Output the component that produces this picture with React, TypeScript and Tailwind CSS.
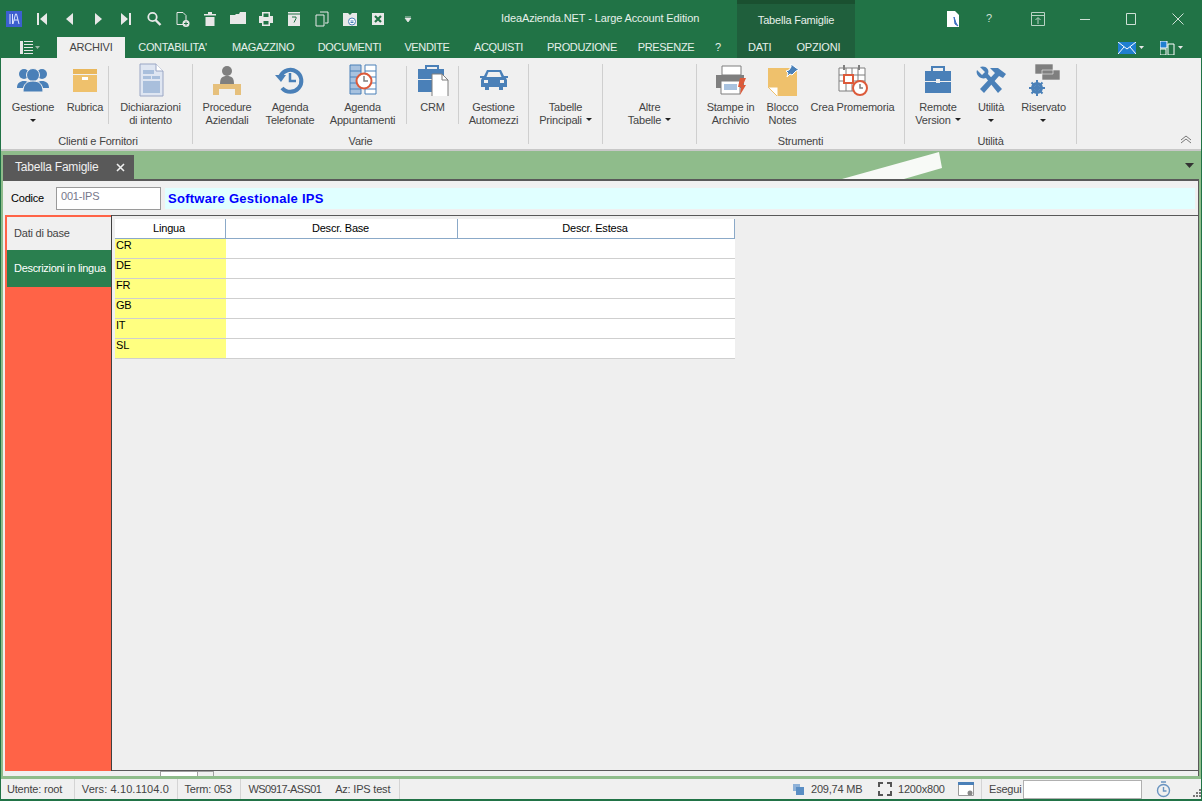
import type { ReactNode } from "react";

const blue = "#4a80b8";
const tan = "#efc16c";
const grey = "#7f7f7f";
const red = "#dc5a3a";

// white glyphs of the quick access toolbar, 16x16 box
const quickIcons: ReactNode[] = [
  <path d="M3 2h2v12H3zM13 2v12L6 8z" fill="#e8e8e8" />,
  <path d="M11 2v12L4 8z" fill="#e8e8e8" />,
  <path d="M5 2v12l7-6z" fill="#e8e8e8" />,
  <path d="M3 2v12l7-6zM11 2h2v12h-2z" fill="#e8e8e8" />,
  <g fill="none" stroke="#e8e8e8"><circle cx="6.5" cy="6" r="4.2" strokeWidth="1.8" /><path d="M9.5 9l5 5" strokeWidth="2.4" /></g>,
  <g><path d="M3 1.5h6l3 3v9H3z" fill="none" stroke="#e8e8e8" /><circle cx="12" cy="12.5" r="3.5" fill="#e8e8e8" /><path d="M10 12.5h4M12 10.5v4" stroke="#217346" /></g>,
  <path d="M6 1h4v2h4v1.5H2V3h4zM3.500 6h9v9h-9z" fill="#e8e8e8" />,
  <path d="M0 4h5l1-1h3l1-2h6v12H0z" fill="#e8e8e8" />,
  <path d="M4 1h8v4h3v7h-3v3H4v-3H1V5h3zM5.500 2.500V6h5V2.500zM5.500 10v3.500h5V10z" fill="#e8e8e8" fillRule="evenodd" />,
  <g><path d="M2 1h12v14H2z" fill="#e8e8e8" /><path d="M2 3h12" stroke="#217346" /><path d="M6 6h4v1.500l-2 4" stroke="#217346" fill="none" /></g>,
  <path d="M6 1h8v11h-3M2 4h8v11H2z" fill="none" stroke="#e8e8e8" />,
  <g><path d="M1 2h5l2 2 2-2h5v13H1z" fill="#e8e8e8" /><circle cx="10" cy="10.500" r="3.500" fill="#fff" stroke="#4a80b8" /><path d="M8.500 10h3M8.500 11.500h3" stroke="#4a80b8" /></g>,
  <g><path d="M2 2h12v12H2z" fill="#e8e8e8" /><path d="M5 5l6 6M11 5l-6 6" stroke="#217346" strokeWidth="2.200" /></g>,
];

const Caret = () => (
  <svg width="6" height="3" viewBox="0 0 6 3" className="inline-block">
    <path d="M0 0h6L3 3z" fill="#222" />
  </svg>
);

type ItemProps = { w: string; icon?: ReactNode; lines: string[]; caret?: "inline" | "below" };

function RibbonItem({ w, icon, lines, caret }: ItemProps) {
  return (
    <div className={`${w} flex flex-col items-center shrink-0`}>
      <div className="h-[34px] flex items-center justify-center shrink-0">{icon}</div>
      <div className="mt-[4px] text-center leading-[13px] text-[#444] whitespace-nowrap">
        {lines.map((l, i) => (
          <div key={l}>
            {l}
            {caret === "inline" && i === lines.length - 1 && <span className="ml-[4px] relative -top-[2px]"><Caret /></span>}
          </div>
        ))}
        {caret === "below" && <div className="h-[13px] flex items-center justify-center"><Caret /></div>}
      </div>
    </div>
  );
}

const ShortSep = () => <div className="w-px h-[58px] mt-[3px] bg-[#cfcfcf] shrink-0" />;

function RibbonGroup({ w, label, children }: { w: string; label: string; children?: ReactNode }) {
  return (
    <div className={`${w} shrink-0 flex flex-col border-r border-[#cfcfcf] h-[80px] mt-[6px]`}>
      <div className="flex h-[72px] -mt-[1px] shrink-0">{children}</div>
      <div className="text-center text-[#444] leading-[13px] shrink-0">{label}</div>
    </div>
  );
}

const iconProps = { viewBox: "0 0 32 32", width: 32, height: 32 };

const PeopleIcon = () => (
  <svg {...iconProps}>
    <g fill={blue}>
      <circle cx="7" cy="10" r="5" /><circle cx="25" cy="10" r="5" />
      <path d="M0 24c0-5 3-7 7-7s7 2 7 7zM18 24c0-5 3-7 7-7s7 2 7 7z" />
    </g>
    <circle cx="16" cy="11" r="6.500" fill={blue} stroke="#f0f0f0" />
    <path d="M6 28c0-8 4-11 10-11s10 3 10 11z" fill={blue} stroke="#f0f0f0" />
  </svg>
);

const BoxIcon = () => (
  <svg {...iconProps}>
    <path d="M4 5h24v5H4z" fill="#e9b75c" /><path d="M4 11h24v17H4z" fill={tan} />
    <path d="M13 13h6v3h-6z" fill="#fff" />
  </svg>
);

const DocIcon = () => (
  <svg width="28" height="34" viewBox="0 0 28 34">
    <path d="M3 1h16l7 7v25H3z" fill="#dfe6f2" stroke="#9aa6c4" />
    <path d="M19 1v7h7" fill="#fff" stroke="#9aa6c4" />
    <path d="M6 7h11v4H6zM6 13h8v3H6zM15 13h8v3h-8zM6 18h17v12H6z" fill="#a9bfdc" />
  </svg>
);

const DeskIcon = () => (
  <svg {...iconProps}>
    <circle cx="16" cy="7" r="5" fill={grey} /><path d="M9 20c0-6 2-8 7-8s7 2 7 8z" fill={grey} />
    <path d="M2 20h28v11h-6v-6H8v6H2z" fill="#e6c07c" />
  </svg>
);

const HistoryIcon = () => (
  <svg {...iconProps}>
    <path d="M6.500 12A11 11 0 1 1 8 24" fill="none" stroke={blue} strokeWidth="4" />
    <path d="M1 11h11l-5 7z" fill={blue} />
    <path d="M16 9v8h6" fill="none" stroke={blue} strokeWidth="2.500" />
  </svg>
);

const PlannerIcon = () => (
  <svg {...iconProps}>
    <path d="M3 1h11v29H3z" fill="#a8c2df" stroke={blue} /><path d="M18 1h11v29H18z" fill="#fff" stroke={blue} />
    <path d="M3 7h11M3 13h11M3 19h11M3 25h11M18 7h11M18 13h11M18 19h11M18 25h11" stroke={blue} />
    <circle cx="17" cy="17" r="7.500" fill="#fff" stroke={red} strokeWidth="2" /><path d="M17 12v5h4" fill="none" stroke={grey} strokeWidth="1.500" />
  </svg>
);

const CrmIcon = () => (
  <svg {...iconProps}>
    <path d="M9 5V2h12v3" fill="none" stroke={blue} strokeWidth="2" />
    <path d="M1 5h26v10H1zM1 16h26v12H1z" fill={blue} />
    <path d="M15 10h10l6 6v17H15z" fill="#fff" stroke={grey} /><path d="M25 10v6h6" fill="none" stroke={grey} />
  </svg>
);

const CarIcon = () => (
  <svg width="28" height="20" viewBox="0 0 28 20">
    <path d="M7 0h14l3 6h4v2h-2l1 2v7h-4v3h-4v-3H9v3H5v-3H1v-7l1-2H0V6h4z" fill={blue} />
    <path d="M8.500 2h11l2 5h-15z" fill="#f0f0f0" />
    <path d="M4 10h4v3H4zM20 10h4v3h-4z" fill="#f0f0f0" />
  </svg>
);

const PrintIcon = () => (
  <svg {...iconProps}>
    <path d="M7 2h19v9H7z" fill="#fff" stroke={grey} /><path d="M1 11h28v13H1z" fill={grey} />
    <path d="M6 17h19v13H6z" fill="#fff" stroke={grey} /><path d="M9 20h13v6H9z" fill="#a8c2df" />
    <path d="M25 14h6l-3 7h3l-6 10 1-8h-3z" fill={red} />
  </svg>
);

const NoteIcon = () => (
  <svg {...iconProps}>
    <path d="M1 4h29v29H11L1 23z" fill={tan} /><path d="M1 23h10v10z" fill="#fff" stroke={tan} />
    <path d="M24 0l8 6-3 1-4 4-2-1-3 3 1-4-2-2 3-1 2-3z" fill={blue} stroke="#fff" />
  </svg>
);

const CalendarIcon = () => (
  <svg {...iconProps}>
    <path d="M2 4h26v23H2z" fill="#fff" stroke={grey} />
    <path d="M2 11h26M2 17h26M9 4v23M15 4v23M21 4v23" stroke={grey} />
    <path d="M7 1v5M22 1v5" stroke={grey} strokeWidth="2" />
    <path d="M7 11h9v8H7z" fill="#fff" stroke={red} strokeWidth="2" />
    <circle cx="23" cy="24" r="7" fill="#fff" stroke={red} strokeWidth="2" /><path d="M23 20v4h3" fill="none" stroke={grey} strokeWidth="1.500" />
  </svg>
);

const CaseIcon = () => (
  <svg {...iconProps}>
    <path d="M10 7V3h12v4" fill="none" stroke={blue} strokeWidth="2" />
    <path d="M3 7h26v10H3zM3 18h26v11H3z" fill={blue} /><path d="M14 15h4v4h-4z" fill="#f0f0f0" />
  </svg>
);

const ToolsIcon = () => (
  <svg {...iconProps}>
    <path d="M2 6l5 5 3-3-5-5c5-2 10 2 8 7l14 15-4 4L11 14C6 16 0 11 2 6z" fill={blue} />
    <path d="M15 4h8l8 6-3 4-4-2L9 29l-4-4L20 9z" fill={blue} />
  </svg>
);

const ReservedIcon = () => (
  <svg {...iconProps}>
    <path d="M7 0h18v10H7zM14 6h18v10H14z" fill={grey} stroke="#f0f0f0" strokeWidth="0.600" />
    <circle cx="9" cy="24" r="4.500" fill="none" stroke={blue} strokeWidth="3" />
    <path d="M9 16v16M1 24h16M3.500 18.500l11 11M14.500 18.500l-11 11" stroke={blue} strokeWidth="2" />
  </svg>
);

type Col = { text: string; w: string };
const columns: Col[] = [
  { text: "Lingua", w: "w-[111px]" },
  { text: "Descr. Base", w: "w-[232px]" },
  { text: "Descr. Estesa", w: "w-[277px]" },
];
const languages = ["CR", "DE", "FR", "GB", "IT", "SL"];
const tabs = [
  { text: "CONTABILITA'", w: "w-[95px]" },
  { text: "MAGAZZINO", w: "w-[86px]" },
  { text: "DOCUMENTI", w: "w-[87px]" },
  { text: "VENDITE", w: "w-[68px]" },
  { text: "ACQUISTI", w: "w-[75px]" },
  { text: "PRODUZIONE", w: "w-[92px]" },
  { text: "PRESENZE", w: "w-[76px]" },
  { text: "?", w: "w-[28px]" },
];
const statusLeft = [
  { text: "Utente: root", box: "w-[69px] pl-px border-r border-[#d4d4d4]" },
  { text: "Vers: 4.10.1104.0", box: "w-[103px] pl-[7px] border-r border-[#d4d4d4] tracking-[0.1px]" },
  { text: "Term: 053", box: "w-[64px] pl-[7px] border-r border-[#d4d4d4]" },
  { text: "WS0917-ASS01", box: "w-[88px] pl-[7px] tracking-[-0.6px]" },
  { text: "Az: IPS test", box: "w-[71px] pl-[6px] border-r border-[#d4d4d4]" },
];

export default function App() {
  return (
    <div className="w-[1202px] h-[801px] overflow-hidden bg-[#217346] flex flex-col text-[11px] tracking-[-0.2px] font-['Liberation_Sans',sans-serif]">
      {/* title bar */}
      <div className="h-[37px] flex items-stretch text-white shrink-0">
        <div className="w-[422px] flex items-center pl-[6px] shrink-0">
          <svg width="16" height="16" viewBox="0 0 16 16">
            <path d="M0 0h16v16H0z" fill="#3c5fd0" />
            <path d="M4 3v10M6.500 3v10M7 13l2.500-10h1l2.500 10M8 9h4" stroke="#dfe6ff" fill="none" />
          </svg>
          <div className="flex ml-[6px]">
            {quickIcons.map((g, i) => (
              <div key={i} className="w-[28px] flex justify-center">
                <svg width="16" height="16" viewBox="0 0 16 16">{g}</svg>
              </div>
            ))}
          </div>
          <svg width="8" height="6" viewBox="0 0 8 6" className="ml-[12px]"><path d="M1 0h6M1 2h6l-3 4z" stroke="#e8e8e8" fill="#e8e8e8" strokeWidth="0.800" /></svg>
        </div>
        <div className="w-[315px] pl-[79px] flex items-center text-[#e6f0ea] whitespace-nowrap shrink-0 tracking-[-0.12px]">IdeaAzienda.NET - Large Account Edition</div>
        <div className="w-[118px] bg-[#1f5f3c] border-t-[4px] border-[#1a5030] flex items-center justify-center text-[#e6f0ea] shrink-0">Tabella Famiglie</div>
        <div className="flex-1 flex items-center pl-[91px] text-[#cfe0d6]">
          <svg width="14" height="18" viewBox="0 0 14 18"><path d="M1 1h8l4 4v12H1z" fill="#fff" /><path d="M8 7l1 7 3 2-2-3z" fill="#3c6fc0" stroke="#3c6fc0" /></svg>
          <span className="ml-[26px] w-[7px]">?</span>
          <svg width="14" height="14" viewBox="0 0 14 14" className="ml-[38px]" fill="none" stroke="#b9d2c4"><path d="M.5.500h13v13H.5zM.5 3.500h13M7 12V6M4.500 8L7 5.500 9.500 8" /></svg>
          <svg width="12" height="12" viewBox="0 0 12 12" className="ml-[34px]" stroke="#cfe0d6"><path d="M1 6.500h10" /></svg>
          <svg width="10" height="12" viewBox="0 0 10 12" className="ml-[35px]" fill="none" stroke="#cfe0d6"><path d="M.5.500h9v11h-9z" /></svg>
          <svg width="12" height="12" viewBox="0 0 12 12" className="ml-[36px]" stroke="#cfe0d6"><path d="M.5.500l11 11M11.500.500l-11 11" /></svg>
        </div>
      </div>

      {/* ribbon tabs */}
      <div className="h-[21px] flex items-stretch text-[#e6f0ea] shrink-0">
        <div className="w-[57px] pl-[20px] flex items-center gap-[2px] shrink-0">
          <svg width="13" height="13" viewBox="0 0 13 13"><path d="M0 0h3v13H0z" fill="#e8e8e8" /><path d="M4 .500h9M4 3.500h9M4 6.500h9M4 9.500h9M4 12.500h9" stroke="#e8e8e8" /></svg>
          <svg width="5" height="3" viewBox="0 0 5 3"><path d="M0 0h5L2.500 3z" fill="#9db8a8" /></svg>
        </div>
        <div className="w-[68px] bg-[#f0f0f0] text-[#444] flex items-center justify-center shrink-0">ARCHIVI</div>
        <div className="flex items-center shrink-0 w-[612px] tracking-[-0.35px]">
          {tabs.map((t) => (
            <span key={t.text} className={`${t.w} text-center whitespace-nowrap`}>{t.text}</span>
          ))}
        </div>
        <div className="w-[118px] bg-[#1f5f3c] flex items-center pl-[11px] gap-[25px] shrink-0">
          <span>DATI</span><span>OPZIONI</span>
        </div>
        <div className="flex-1 flex items-center pl-[263px] gap-[3px]">
          <svg width="18" height="12" viewBox="0 0 18 12"><path d="M0 0h18v12H0z" fill="#1f7fd0" /><path d="M0 0l9 7 9-7M0 12l6-7M18 12l-6-7" stroke="#fff" fill="none" /></svg>
          <svg width="5" height="3" viewBox="0 0 5 3"><path d="M0 0h5L2.500 3z" fill="#e8e8e8" /></svg>
          <svg width="15" height="14" viewBox="0 0 15 14" className="ml-[13px]"><path d="M0 0h7v7H0z" fill="#1f7fd0" stroke="#fff" /><path d="M0 8h6v6H0zM8 3h6v11H8z" fill="none" stroke="#fff" /></svg>
          <svg width="5" height="3" viewBox="0 0 5 3"><path d="M0 0h5L2.500 3z" fill="#e8e8e8" /></svg>
        </div>
      </div>

      <div className="flex-1 mx-px min-h-0 flex flex-col">
        {/* ribbon body */}
        <div className="h-[93px] bg-[#f0f0f0] border-b-2 border-[#c8c8c8] flex shrink-0 pl-[3px]">
          <RibbonGroup w="w-[189px]" label="Clienti e Fornitori">
            <RibbonItem w="w-[58px]" icon={<PeopleIcon />} lines={["Gestione"]} caret="below" />
            <RibbonItem w="w-[46px]" icon={<BoxIcon />} lines={["Rubrica"]} />
            <ShortSep />
            <RibbonItem w="w-[83px]" icon={<DocIcon />} lines={["Dichiarazioni", "di intento"]} />
          </RibbonGroup>
          <RibbonGroup w="w-[336px]" label="Varie">
            <RibbonItem w="w-[68px]" icon={<DeskIcon />} lines={["Procedure", "Aziendali"]} />
            <RibbonItem w="w-[58px]" icon={<HistoryIcon />} lines={["Agenda", "Telefonate"]} />
            <RibbonItem w="w-[87px]" icon={<PlannerIcon />} lines={["Agenda", "Appuntamenti"]} />
            <ShortSep />
            <RibbonItem w="w-[51px]" icon={<CrmIcon />} lines={["CRM"]} />
            <ShortSep />
            <RibbonItem w="w-[69px]" icon={<CarIcon />} lines={["Gestione", "Automezzi"]} />
          </RibbonGroup>
          <RibbonGroup w="w-[74px]" label="">
            <RibbonItem w="w-[73px]" lines={["Tabelle", "Principali"]} caret="inline" />
          </RibbonGroup>
          <RibbonGroup w="w-[94px]" label="">
            <RibbonItem w="w-[93px]" lines={["Altre", "Tabelle"]} caret="inline" />
          </RibbonGroup>
          <RibbonGroup w="w-[208px]" label="Strumenti">
            <RibbonItem w="w-[67px]" icon={<PrintIcon />} lines={["Stampe in", "Archivio"]} />
            <RibbonItem w="w-[37px]" icon={<NoteIcon />} lines={["Blocco", "Notes"]} />
            <RibbonItem w="w-[103px]" icon={<CalendarIcon />} lines={["Crea Promemoria"]} />
          </RibbonGroup>
          <RibbonGroup w="w-[172px]" label="Utilità">
            <RibbonItem w="w-[66px]" icon={<CaseIcon />} lines={["Remote", "Version"]} caret="inline" />
            <RibbonItem w="w-[40px]" icon={<ToolsIcon />} lines={["Utilità"]} caret="below" />
            <RibbonItem w="w-[65px]" icon={<ReservedIcon />} lines={["Riservato"]} caret="below" />
          </RibbonGroup>
          <div className="flex-1 flex items-end justify-end pr-[9px] pb-[5px]">
            <svg width="12" height="9" viewBox="0 0 12 9" fill="none" stroke="#777"><path d="M1 5l5-4 5 4M1 8l5-4 5 4" /></svg>
          </div>
        </div>

        {/* document tab strip */}
        <div className="relative h-[28px] bg-[#8fbc8b] shrink-0 flex items-end pl-[2px]">
          <div className="w-[131px] h-[24px] bg-[#595959] text-[#f0f0f0] text-[12px] flex items-center pl-[12px] justify-between pr-[9px]">
            <span>Tabella Famiglie</span>
            <svg width="9" height="9" viewBox="0 0 9 9" stroke="#f0f0f0" strokeWidth="1.600"><path d="M1 1l7 7M8 1L1 8" /></svg>
          </div>
          <svg width="100" height="28" viewBox="0 0 100 28" className="absolute left-[841px] top-0"><path d="M0 28L97 1l3 16-38 11z" fill="#f8faf7" /></svg>
          <svg width="9" height="5" viewBox="0 0 9 5" className="absolute right-[7px] top-[12px]"><path d="M0 0h9L4.500 5z" fill="#333" /></svg>
        </div>

        {/* document */}
        <div className="flex-1 min-h-0 bg-[#8fbc8b] px-[2px] flex flex-col">
          <div className="h-[2px] bg-[#595959] shrink-0" />
          <div className="flex-1 min-h-0 bg-[#f0f0f0] flex flex-col border-r border-[#595959]">
            <div className="h-[34px] flex items-center shrink-0 pl-[8px] pr-[3px]">
              <span className="w-[45px] text-black">Codice</span>
              <div className="w-[105px] h-[23px] bg-white border border-[#9a9a9a] pl-[4px] text-[#77778a] leading-[17px]">001-IPS</div>
              <div className="flex-1 h-[21px] ml-[4px] bg-[#e0ffff] pl-[3px] text-[#0000ff] font-bold text-[13px] leading-[22px] tracking-[0.27px]">Software Gestionale IPS</div>
            </div>
            <div className="flex-1 min-h-0 flex ml-[2px]">
              <div className="w-[107px] bg-[#ff6347] border-r border-[#404040] shrink-0 pl-[2px] pt-[2px]">
                <div className="h-[33px] bg-[#f0f0f0] text-[#444] flex items-center pl-[7px]">Dati di base</div>
                <div className="h-[37px] bg-[#2a7f4f] text-white flex items-center pl-[7px] whitespace-nowrap tracking-[-0.3px]">Descrizioni in lingua</div>
              </div>
              <div className="flex-1 pl-[3px] pt-[3px] bg-[#efefef] border-y border-[#595959]">
                <div className="w-[620px]">
                  <div className="flex h-[20px] bg-white border-b border-[#8ba9c8]">
                    {columns.map((c) => (
                      <div key={c.text} className={`${c.w} border-r border-[#8ba9c8] text-center text-black leading-[19px] pr-[2px]`}>{c.text}</div>
                    ))}
                  </div>
                  {languages.map((l) => (
                    <div key={l} className="flex h-[20px] bg-white border-b border-[#cfcfcf]">
                      <div className="w-[111px] bg-[#ffff80] pl-px text-black leading-[13px]">{l}</div>
                    </div>
                  ))}
                </div>
              </div>
            </div>
            <div className="h-[5px] shrink-0 bg-[#f0f0f0] flex pl-[157px]">
              <div className="w-[38px] h-full bg-white border-x border-t border-[#a0a0a0]" />
              <div className="w-[16px] h-full border-r border-t border-[#a0a0a0]" />
            </div>
          </div>
          <div className="h-[3px] shrink-0" />
        </div>

        {/* status bar */}
        <div className="h-[20px] bg-[#f0f0f0] flex items-center shrink-0 text-[#444] pl-[5px]">
          {statusLeft.map((s) => (
            <div key={s.text} className={`${s.box} h-full flex items-center whitespace-nowrap`}>{s.text}</div>
          ))}
          <div className="flex-1 flex items-center h-full pl-[393px]">
            <svg width="11" height="11" viewBox="0 0 11 11"><path d="M0 0h7v7H0z" fill="#8fb2d8" /><path d="M3 3h8v8H3z" fill="#5a8ec4" /></svg>
            <span className="ml-[7px] w-[67px]">209,74 MB</span>
            <svg width="14" height="14" viewBox="0 0 14 14" fill="none" stroke="#555" strokeWidth="2"><path d="M1 5V1h4M9 1h4v4M13 9v4H9M5 13H1V9" /></svg>
            <span className="ml-[6px] w-[60px]">1200x800</span>
            <svg width="17" height="15" viewBox="0 0 17 15"><path d="M.5.500h15v13H.5z" fill="#fff" stroke="#999" /><path d="M0 0h16v3H0z" fill={blue} /><circle cx="12" cy="11" r="2.500" fill="#888" /></svg>
            <div className="w-px h-full bg-[#d4d4d4] ml-[6px]" />
            <span className="ml-[7px] w-[34px]">Esegui</span>
            <div className="w-[119px] h-[19px] bg-white border border-[#b0b0b0]" />
            <svg width="15" height="17" viewBox="0 0 15 17" fill="none" stroke="#6a94c0" strokeWidth="1.400" className="ml-[14px]"><circle cx="7.500" cy="9.500" r="6" /><path d="M5 1h5M7.500 6v4h3" /></svg>
            <svg width="8" height="8" viewBox="0 0 8 8" className="ml-[22px] mt-[8px]" fill="#777"><path d="M6 0h2v2H6zM3 3h2v2H3zM6 3h2v2H6zM0 6h2v2H0zM3 6h2v2H3zM6 6h2v2H6z" /></svg>
          </div>
        </div>
      </div>
      <div className="h-[2px] shrink-0" />
    </div>
  );
}
